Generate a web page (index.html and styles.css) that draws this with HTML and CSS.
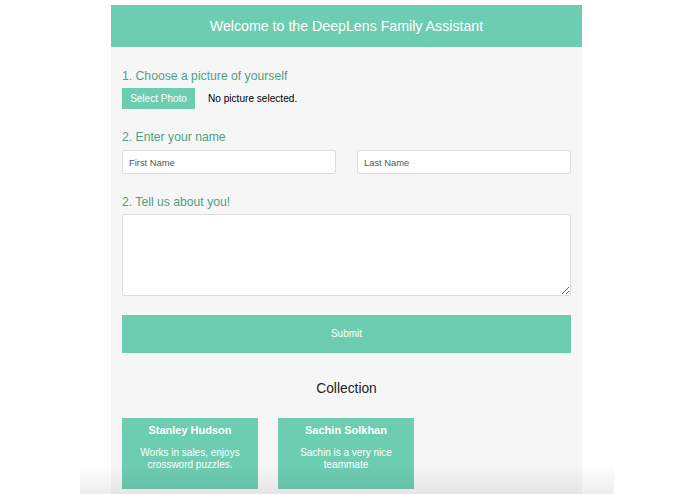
FILE: index.html
```html
<!doctype html>
<html>
  <head>
    <title>DeepLens Family Assistant</title>
    <link rel="stylesheet" href="styles.css">
  </head>
  <body>
    <div id='app'>
      <div id='header'>Welcome to the DeepLens Family Assistant</div>
      <div id='form'>
        <div class='label'>1. Choose a picture of yourself</div>
        <div class='photoRow'>
          <span class='photoButton'>Select Photo</span>
          <span class='photoStatus'>No picture selected.</span>
        </div>
        <div class='label'>2. Enter your name</div>
        <div class='nameRow'>
          <input type='text' placeholder='First Name' />
          <input type='text' placeholder='Last Name' />
        </div>
        <div class='label'>2. Tell us about you!</div>
        <textarea></textarea>
        <div class='submit'>Submit</div>
      </div>
      <div id='collection'>
        <h2>Collection</h2>
        <div class='cards'>
          <div class='card'>
            <div class='cardName'>Stanley Hudson</div>
            <div class='cardText'>Works in sales, enjoys crossword puzzles.</div>
          </div>
          <div class='card'>
            <div class='cardName'>Sachin Solkhan</div>
            <div class='cardText'>Sachin is a very nice teammate</div>
          </div>
        </div>
      </div>
    </div>
    <div id='fade'></div>
  </body>
</html>
```
FILE: styles.css
```css
body {
  margin:             0;
  background-color:   white;
  font-family:        "Liberation Sans", Arial, sans-serif;
  overflow:           hidden;
}
#app {
  width:              471px;
  margin:             5px 0 0 111px;
  background-color:   #f6f6f6;
  padding-bottom:     40px;
}
#header {
  background-color:   #6dcdb1;
  color:              white;
  height:             42px;
  line-height:        42px;
  text-align:         center;
  font-size:          14.2px;
}
#form {
  padding:            0 11px;
  display:            flex;
  flex-direction:     column;
}
.label {
  color:              #4f9f84;
  font-size:          12.2px;
  line-height:        16px;
  margin-top:         20px;
}
.label:first-child {
  margin-top:         21px;
}
.photoRow {
  display:            flex;
  align-items:        center;
  margin-top:         4px;
}
.photoButton {
  background-color:   #6dcdb1;
  color:              white;
  font-size:          10px;
  height:             21px;
  line-height:        21px;
  width:              73px;
  text-align:         center;
}
.photoStatus {
  font-size:          10.1px;
  color:              black;
  margin-left:        13px;
}
.nameRow {
  display:            flex;
  gap:                21px;
  margin-top:         5px;
}
.nameRow input {
  flex:               1;
  min-width:          0;
  height:             24px;
  box-sizing:         border-box;
  border:             1px solid #dcdcdc;
  border-radius:      2px;
  background-color:   white;
  padding:            0 6px;
  font-family:        inherit;
  font-size:          9.4px;
  color:              #333;
}
.nameRow input::placeholder {
  color:              #555;
}
textarea {
  margin-top:         4px;
  height:             82px;
  box-sizing:         border-box;
  border:             1px solid #dcdcdc;
  border-radius:      2px;
  background-color:   white;
  resize:             vertical;
}
.submit {
  margin-top:         19px;
  background-color:   #6dcdb1;
  color:              white;
  font-size:          10px;
  height:             38px;
  line-height:        38px;
  text-align:         center;
}
#collection {
  padding:            0 11px;
}
#collection h2 {
  margin:             26px 0 0;
  font-weight:        normal;
  font-size:          13.8px;
  line-height:        20px;
  text-align:         center;
  color:              #222;
}
.cards {
  display:            flex;
  gap:                20px;
  margin-top:         19px;
}
.card {
  width:              136px;
  height:             71px;
  background-color:   #6dcdb1;
  color:              white;
  text-align:         center;
  padding:            5px 10px 0;
  box-sizing:         border-box;
}
.cardName {
  font-weight:        bold;
  font-size:          11px;
  line-height:        14px;
}
.cardText {
  font-size:          10px;
  line-height:        12px;
  margin-top:         10px;
}
#fade {
  position:           absolute;
  left:               80px;
  top:                464px;
  width:              534px;
  height:             30px;
  background:         linear-gradient(rgba(0,0,0,0), rgba(0,0,0,0.07));
}
```
